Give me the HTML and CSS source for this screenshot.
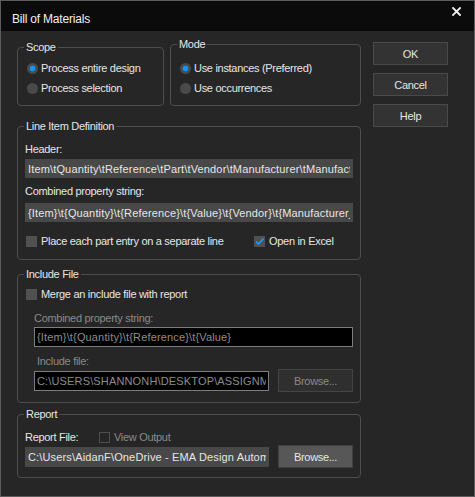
FILE: index.html
```html
<!DOCTYPE html>
<html lang="en">
<head>
    <meta charset="UTF-8">
    <title>Bill of Materials</title>
    <link rel="stylesheet" href="styles.css">
</head>
<body>
    <div class="window">
        <div class="titlebar">
            <span class="title">Bill of Materials</span>
            <svg class="close" width="9" height="9" viewBox="0 0 9 9">
                <path d="M1 1 L8 8 M8 1 L1 8" stroke="#f2f2f2" stroke-width="1.8" stroke-linecap="square"/>
            </svg>
        </div>

        <div class="content">
            <div class="main">
                <div class="top-row">
                    <fieldset class="group scope">
                        <legend>Scope</legend>
                        <div class="option first"><span class="radio checked"></span>Process entire design</div>
                        <div class="option"><span class="radio"></span>Process selection</div>
                    </fieldset>
                    <fieldset class="group mode">
                        <legend>Mode</legend>
                        <div class="option first"><span class="radio checked"></span>Use instances (Preferred)</div>
                        <div class="option"><span class="radio"></span>Use occurrences</div>
                    </fieldset>
                </div>

                <fieldset class="group line-item">
                    <legend>Line Item Definition</legend>
                    <div class="label header-label">Header:</div>
                    <input class="field" type="text" readonly value="Item\tQuantity\tReference\tPart\tVendor\tManufacturer\tManufacturer_PN">
                    <div class="label combined-label">Combined property string:</div>
                    <input class="field second" type="text" readonly value="{Item}\t{Quantity}\t{Reference}\t{Value}\t{Vendor}\t{Manufacturer_PN}">
                    <div class="check-row">
                        <div class="option"><span class="check"></span>Place each part entry on a separate line</div>
                        <div class="option"><span class="check checked"><svg width="11" height="11" viewBox="0 0 11 11"><path d="M2 5.5 L4.5 8 L9.5 2.5" fill="none" stroke="#1e9cff" stroke-width="1.6"/></svg></span>Open in Excel</div>
                    </div>
                </fieldset>

                <fieldset class="group include">
                    <legend>Include File</legend>
                    <div class="option merge"><span class="check"></span>Merge an include file with report</div>
                    <div class="label disabled inc-combined">Combined property string:</div>
                    <input class="field dark inc-input" type="text" readonly value="{Item}\t{Quantity}\t{Reference}\t{Value}">
                    <div class="label disabled inc-file">Include file:</div>
                    <div class="file-row indent">
                        <input class="field dark" type="text" readonly value="C:\USERS\SHANNONH\DESKTOP\ASSIGNMENT\INCLUDE.TXT">
                        <button class="btn browse" disabled>Browse...</button>
                    </div>
                </fieldset>

                <fieldset class="group report">
                    <legend>Report</legend>
                    <div class="report-row">
                        <span class="report-label">Report File:</span>
                        <div class="option disabled"><span class="check empty"></span>View Output</div>
                    </div>
                    <div class="file-row">
                        <input class="field" type="text" readonly value="C:\Users\AidanF\OneDrive - EMA Design Automation\BOM.txt">
                        <button class="btn browse active">Browse...</button>
                    </div>
                </fieldset>
            </div>

            <div class="actions">
                <button class="btn">OK</button>
                <button class="btn">Cancel</button>
                <button class="btn">Help</button>
            </div>
        </div>
    </div>
</body>
</html>
```

FILE: styles.css
```css
body {
    margin: 0;
    background-color: #262626;
    font-family: "Liberation Sans", Arial, sans-serif;
    font-size: 11px;
    letter-spacing: -0.3px;
    color: #e6e6e6;
}
.window {
    width: 475px;
    height: 497px;
    box-sizing: border-box;
    border: 1px solid #5c5c5c;
    background-color: #262626;
}
.titlebar {
    height: 30px;
    background-color: #0b0b0b;
    display: flex;
    align-items: flex-start;
    justify-content: space-between;
    padding: 0 13px 0 11px;
}
.title {
    margin-top: 11px;
    font-size: 12px;
    line-height: 14px;
    letter-spacing: -0.2px;
    color: #f0f0f0;
}
.close {
    margin-top: 6px;
}
.content {
    display: flex;
    gap: 12px;
    padding: 7px 0 0 16px;
}
.main {
    width: 344px;
    display: flex;
    flex-direction: column;
}
.top-row {
    display: flex;
    gap: 6px;
    height: 68px;
}
.group {
    margin: 0;
    padding: 0 7px;
    border: 1px solid #4e4e4e;
    border-radius: 4px;
    min-width: 0;
    box-sizing: border-box;
}
.group legend {
    padding: 0 2px;
    margin-left: -1px;
    line-height: 13px;
}
.scope {
    width: 147px;
    margin-top: 3px;
}
.mode {
    width: 191px;
}
.option {
    display: flex;
    align-items: center;
    line-height: 13px;
    white-space: nowrap;
}
.scope .option, .mode .option {
    margin-top: 7px;
    margin-left: 2px;
}
.scope .option.first {
    margin-top: 8px;
}
.mode .option.first {
    margin-top: 11px;
}
.radio {
    width: 11px;
    height: 11px;
    border-radius: 50%;
    background-color: #4a4a4a;
    margin-right: 3px;
    flex: none;
}
.radio.checked {
    background: radial-gradient(circle, #0d98ff 0 2.6px, #4a4a4a 3.2px);
}
.check {
    width: 11px;
    height: 11px;
    background-color: #505050;
    margin: 0 4px 0 1px;
    flex: none;
    display: flex;
}
.check.empty {
    background: transparent;
    box-sizing: border-box;
    border: 1px solid #4e4e4e;
}
.label {
    line-height: 13px;
}
.disabled {
    color: #8a8a8a;
}
.header-label {
    margin-top: 10px;
}
.combined-label {
    margin-top: 7px;
}
.field {
    display: block;
    width: 100%;
    height: 19px;
    box-sizing: border-box;
    margin: 3px 0 0;
    padding: 0 3px;
    border: none;
    background-color: #484848;
    color: #e6e6e6;
    font: inherit;
    letter-spacing: 0.15px;
    outline: none;
}
.field.second {
    margin-top: 5px;
}
.field.dark {
    height: 20px;
    background-color: #000;
    border: 1px solid #7d7d7d;
    color: #8c8c8c;
    padding: 0 2px;
}
.check-row {
    display: grid;
    grid-template-columns: 228px auto;
    margin-top: 13px;
}
.line-item {
    margin-top: 14px;
    padding-bottom: 11px;
}
.include {
    margin-top: 8px;
    padding-bottom: 10px;
}
.merge {
    margin-top: 7px;
}
.indent {
    margin-left: 9px;
}
.inc-combined {
    margin-top: 11px;
    margin-left: 9px;
}
.field.inc-input {
    width: calc(100% - 9px);
    margin: 2px 0 0 9px;
}
.inc-file {
    margin-top: 8px;
    margin-left: 12px;
}
.file-row {
    display: flex;
    align-items: center;
    gap: 9px;
    margin-top: 1px;
}
.file-row .field {
    flex: 1;
    width: auto;
    min-width: 0;
    margin: 0;
}
.report {
    margin-top: 5px;
    padding-bottom: 9px;
}
.report .file-row .field {
    height: 20px;
}
.report-row {
    display: flex;
    align-items: center;
    margin-top: 10px;
    line-height: 13px;
}
.report-label {
    width: 73px;
}
.btn {
    width: 75px;
    height: 23px;
    padding: 0;
    background-color: #333333;
    border: 1px solid #4a4a4a;
    color: #e6e6e6;
    font: inherit;
    letter-spacing: inherit;
    flex: none;
}
.btn.browse {
    background-color: #2f2f2f;
    border-color: #444;
    color: #8a8a8a;
}
.btn.browse.active {
    background-color: #575757;
    border-color: #404040;
    color: #e6e6e6;
}
.actions {
    display: flex;
    flex-direction: column;
    gap: 8px;
    margin-top: 4px;
}
```
